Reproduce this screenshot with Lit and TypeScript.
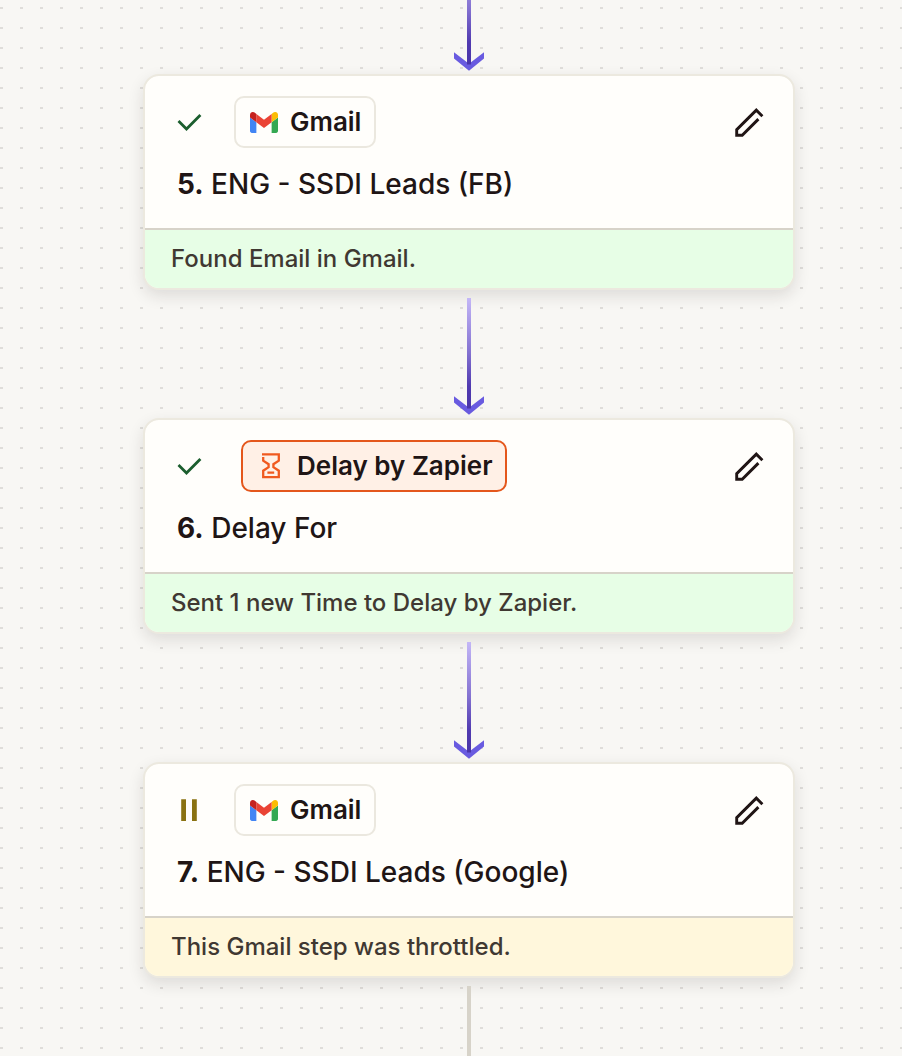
import { LitElement, html, svg, css, nothing } from "lit";
import { customElement, property } from "lit/decorators.js";
import { classMap } from "lit/directives/class-map.js";

type Status = "success" | "paused";
type AppName = "Gmail" | "Delay by Zapier";

interface Step {
  number: number;
  app: AppName;
  title: string;
  status: Status;
  message: string;
}

const STEPS: Step[] = [
  { number: 5, app: "Gmail", title: "ENG - SSDI Leads (FB)", status: "success", message: "Found Email in Gmail." },
  { number: 6, app: "Delay by Zapier", title: "Delay For", status: "success", message: "Sent 1 new Time to Delay by Zapier." },
  { number: 7, app: "Gmail", title: "ENG - SSDI Leads (Google)", status: "paused", message: "This Gmail step was throttled." },
];

const checkIcon = html`<svg width="26" height="26" viewBox="0 0 26 26" fill="none" role="img" aria-label="Success">
  <path d="M1.5 12.1l8 8L23.4 6.1" stroke="#1b5e2e" stroke-width="2.8" />
</svg>`;

const pauseIcon = html`<svg width="26" height="26" viewBox="0 0 26 26" fill="#8a7212" role="img" aria-label="Paused">
  <path d="M4.2 2.3h4.8v21.7H4.2zM15 2.3h4.8v21.7H15z" />
</svg>`;

const pencilIcon = html`<svg width="32" height="32" viewBox="0 0 32 32" fill="none" aria-hidden="true">
  <path d="M29.4 10.2L23.3 4.1 3.7 23.7v5.6h5.5L25.4 13.1" stroke="#201515" stroke-width="2.9" />
</svg>`;

const gmailLogo = html`<svg width="28" height="21" viewBox="52 42 88 66" aria-hidden="true">
  <path fill="#4285f4" d="M58 108h14V74L52 59v43c0 3.32 2.69 6 6 6" />
  <path fill="#34a853" d="M120 108h14c3.32 0 6-2.69 6-6V59l-20 15" />
  <path fill="#fbbc04" d="M120 48v26l20-15v-8c0-7.42-8.47-11.65-14.4-7.2" />
  <path fill="#ea4335" d="M72 74V48l24 18 24-18v26L96 92" />
  <path fill="#c5221f" d="M52 51v8l20 15V48l-5.6-4.2c-5.94-4.45-14.4-.22-14.4 7.2" />
</svg>`;

const delayLogo = html`<svg width="28" height="28" viewBox="0 0 28 28" fill="none" stroke="#f0591f" stroke-width="2.3" aria-hidden="true">
  <path d="M5 2.3h16.8v6.3l-5.4 3.6v2.9l5.4 3.6v6.5H6.2v-6.5l5.4-3.6v-2.9L6.2 8.6V5" />
  <path d="M10.4 20.7h6.8" />
</svg>`;

@customElement("flow-connector")
class FlowConnector extends LitElement {
  @property() variant: "arrow" | "entry" | "plain" = "arrow";

  static styles = css`
    :host {
      display: flex;
      justify-content: center;
      align-items: flex-end;
      padding: 8px 0 4px;
    }
    :host([variant="entry"]) {
      height: 70px;
      padding-top: 0;
      overflow: hidden;
    }
    :host([variant="plain"]) {
      flex: 1;
      min-height: 70px;
      padding-bottom: 0;
      align-items: stretch;
    }
    .arrow {
      display: block;
      flex: none;
      overflow: visible;
    }
    .line {
      width: 4px;
      background: #d7d3c9;
    }
  `;

  render() {
    if (this.variant === "plain") return html`<div class="line"></div>`;
    return html`<svg class="arrow" width="32" height="116" viewBox="0 0 32 116" aria-hidden="true">
      ${svg`<defs>
        <linearGradient id="stem" x1="0" y1="0" x2="0" y2="1">
          <stop offset="0" stop-color="#c4b7f7" />
          <stop offset="0.5" stop-color="#8371d0" />
          <stop offset="0.8" stop-color="#503ab0" />
          <stop offset="1" stop-color="#4a35a8" />
        </linearGradient>
      </defs>
      <path d="M1 98.3v6.3l15 12.1 15-12.1v-6.3L16 109.8z" fill="#695be0" />
      <rect x="14" y="0" width="4" height="110.5" fill="url(#stem)" />`}
    </svg>`;
  }
}

@customElement("step-card")
class StepCard extends LitElement {
  @property({ attribute: false }) step!: Step;

  static styles = css`
    :host {
      display: block;
    }
    .card {
      border: 2px solid #ece9df;
      border-radius: 16px;
      background: #fffefb;
      background-clip: padding-box;
      box-shadow: 0 6px 16px rgba(32, 21, 21, 0.12);
      overflow: hidden;
    }
    .body {
      padding: 20px 28px 26px 32px;
    }
    .top {
      display: flex;
      align-items: center;
    }
    .status {
      display: flex;
      width: 57px;
    }
    .chip {
      display: flex;
      align-items: center;
      gap: 12px;
      height: 52px;
      box-sizing: border-box;
      padding: 0 13px 0 14px;
      border: 2px solid #ebe8df;
      border-radius: 10px;
      font-size: 26px;
      font-weight: 600;
      line-height: 32px;
      color: #201515;
    }
    .chip.delay {
      margin-left: 7px;
      padding-right: 12px;
      border-color: #e4571c;
      background: #fff0e6;
    }
    .edit {
      display: flex;
      margin-left: auto;
      padding: 0;
      border: 0;
      background: none;
      cursor: pointer;
    }
    .title {
      margin: 18px 0 0;
      font-size: 28px;
      font-weight: 500;
      line-height: 36px;
      color: #201515;
    }
    .number {
      font-weight: 700;
    }
    .message {
      margin: 0;
      padding: 13px 26px;
      border-top: 2px solid #d7d3c9;
      font-size: 24px;
      font-weight: 500;
      line-height: 32px;
      color: #403832;
    }
    .message.success {
      background: #e7fee6;
    }
    .message.paused {
      background: #fff7dc;
    }
  `;

  render() {
    const { number, app, title, status, message } = this.step;
    const isDelay = app === "Delay by Zapier";
    return html`<article class="card">
      <div class="body">
        <div class="top">
          <span class="status">${status === "success" ? checkIcon : pauseIcon}</span>
          <span class=${classMap({ chip: true, delay: isDelay })}>${isDelay ? delayLogo : gmailLogo}${app}</span>
          <button class="edit" type="button" aria-label="Edit step ${number}">${pencilIcon}</button>
        </div>
        <h2 class="title"><span class="number">${number}.</span> ${title}</h2>
      </div>
      <p class=${classMap({ message: true, [status]: true })}>${message}</p>
    </article>`;
  }
}

@customElement("app-root")
class AppRoot extends LitElement {
  static styles = css`
    :host {
      display: block;
      font-family: Inter, "Liberation Sans", sans-serif;
    }
    .canvas {
      display: flex;
      flex-direction: column;
      min-height: 100vh;
      box-sizing: border-box;
      padding-left: 36px;
      background-color: #f8f7f4;
      background-image: conic-gradient(from 90deg at 17px 18px, #dfddda 90deg, transparent 0);
      background-size: 20px 20px;
      background-position: 3px 9px;
    }
    .flow {
      display: flex;
      flex: 1;
      flex-direction: column;
      width: 100%;
      max-width: 652px;
      margin: 0 auto;
    }
  `;

  render() {
    return html`<main class="canvas">
      <div class="flow">
        <flow-connector variant="entry"></flow-connector>
        ${STEPS.map(
          (step, i) => html`${i > 0 ? html`<flow-connector variant="arrow"></flow-connector>` : nothing}
            <step-card .step=${step}></step-card>`,
        )}
        <flow-connector variant="plain"></flow-connector>
      </div>
    </main>`;
  }
}
